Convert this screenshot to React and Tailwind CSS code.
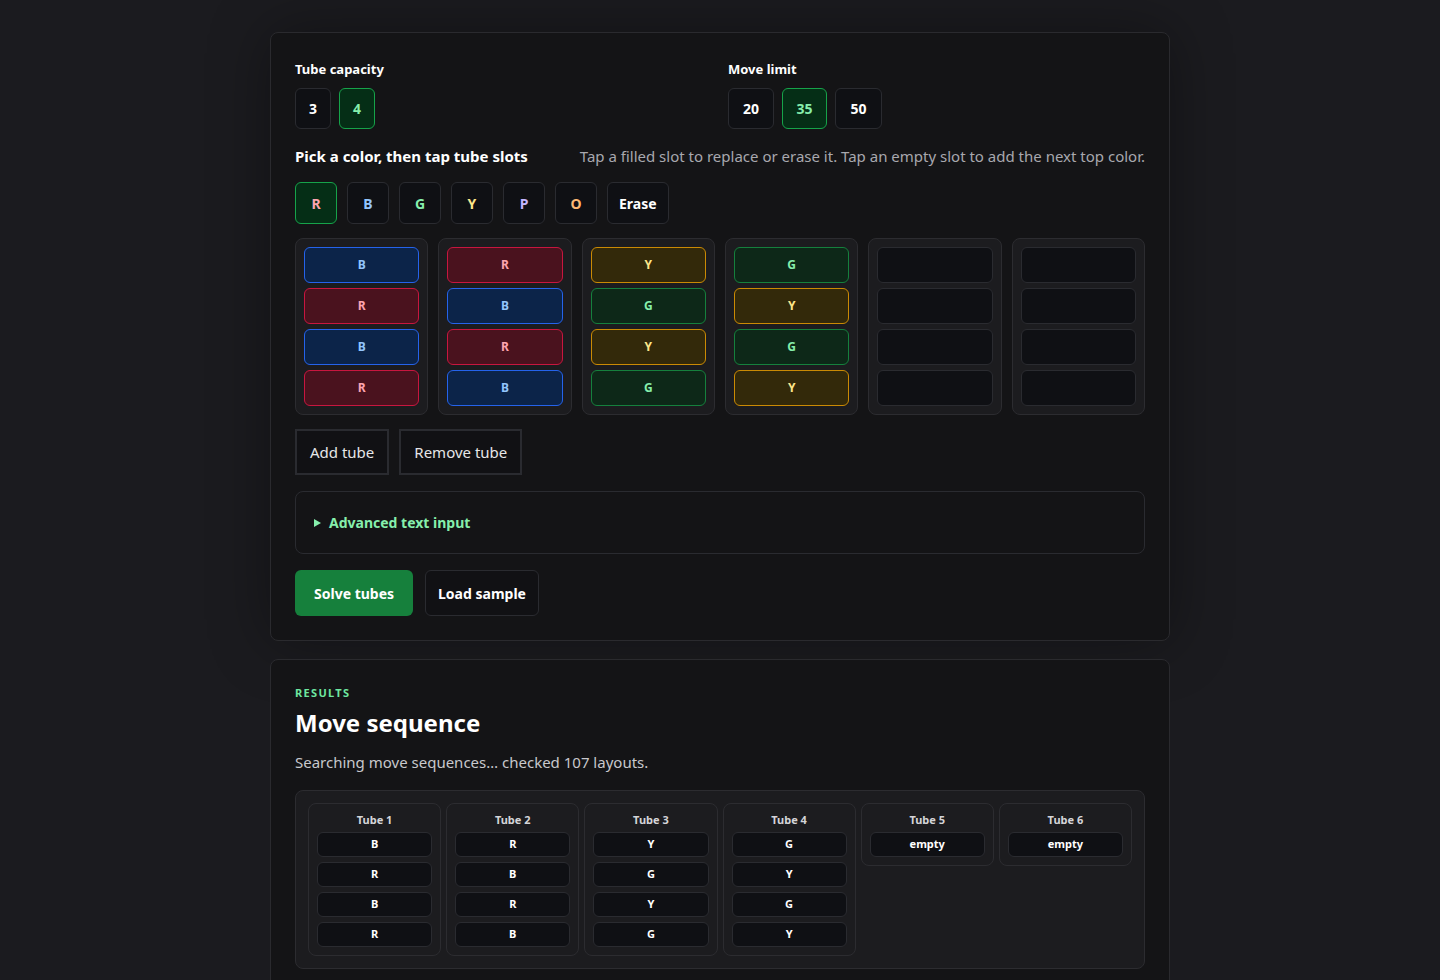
import React from "react";

const C = {
  R: "bg-[#4a121e] border-[#c8163f] text-[#fda4af]",
  B: "bg-[#0c2449] border-[#2563eb] text-[#93c5fd]",
  G: "bg-[#0d2818] border-[#15803d] text-[#86efac]",
  Y: "bg-[#33290a] border-[#ca8a04] text-[#fde68a]",
};
const tubes = [["B","R","B","R"],["R","B","R","B"],["Y","G","Y","G"],["G","Y","G","Y"],[],[]];
const pal = [["R","text-[#fda4af]"],["B","text-[#93c5fd]"],["G","text-[#86efac]"],["Y","text-[#fde68a]"],["P","text-[#c4b5fd]"],["O","text-[#fdba74]"]];

function Opt({ v, on, w = "w-9" }) {
  return (
    <div className={`${w} h-[41px] flex items-center justify-center rounded-md border text-[14px] font-bold ${on ? "bg-[#052e16] border-[#16a34a] text-[#86efac]" : "bg-[#0f1014] border-[#2a2b30] text-white"}`}>{v}</div>
  );
}

export default function App() {
  return (
    <div className="min-h-screen bg-[#1b1b1f] py-8 text-white font-[Inter,'Liberation_Sans',sans-serif] [font-feature-settings:'zero']">
      <div className="w-[900px] mx-auto bg-[#141416] border border-[#2a2a2e] rounded-lg px-6 pt-[26px] pb-6 shadow-[0_0_60px_rgba(0,0,0,0.35)]">
        <div className="grid grid-cols-2 gap-4">
          <div>
            <div className="text-[13px] font-bold mb-[9px] leading-5">Tube capacity</div>
            <div className="flex gap-2"><Opt v="3" /><Opt v="4" on /></div>
          </div>
          <div>
            <div className="text-[13px] font-bold mb-[9px] leading-5">Move limit</div>
            <div className="flex gap-2"><Opt v="20" w="w-[46px]" /><Opt v="35" on w="w-[45px]" /><Opt v="50" w="w-[47px]" /></div>
          </div>
        </div>
        <div className="flex justify-between items-center mt-[17px] leading-5">
          <div className="text-[15px] font-bold">Pick a color, then tap tube slots</div>
          <div className="text-[15px] text-[#a8a8ae]">Tap a filled slot to replace or erase it. Tap an empty slot to add the next top color.</div>
        </div>
        <div className="flex gap-[10px] mt-[16px]">
          {pal.map(([l, c], i) => (
            <div key={l} className={`w-[42px] h-[42px] rounded-md border flex items-center justify-center font-bold text-[14px] ${c} ${i === 0 ? "bg-[#052e16] border-[#16a34a]" : "bg-[#0f1014] border-[#2a2b30]"}`}>{l}</div>
          ))}
          <div className="h-[42px] px-[11px] rounded-md border bg-[#0f1014] border-[#2a2b30] flex items-center font-bold text-[14px]">Erase</div>
        </div>
        <div className="grid grid-cols-6 gap-[10px] mt-[14px]">
          {tubes.map((t, i) => (
            <div key={i} className="bg-[#1c1c1f] border border-[#2c2c30] rounded-lg p-2 flex flex-col gap-[5px]">
              {[0,1,2,3].map(j => t[j] ? (
                <div key={j} className={`h-9 rounded-md border flex items-center justify-center text-[12px] font-bold ${C[t[j]]}`}>{t[j]}</div>
              ) : (
                <div key={j} className="h-9 rounded-md border border-[#2a2b30] bg-[#0f1014]" />
              ))}
            </div>
          ))}
        </div>
        <div className="flex gap-[10px] mt-[14px]">
          <div className="h-[46px] px-[13px] border-2 border-[#2a2b30] bg-[#111114] flex items-center text-[15px] text-[#e6e6e8]">Add tube</div>
          <div className="h-[46px] px-[13px] border-2 border-[#2a2b30] bg-[#111114] flex items-center text-[15px] text-[#e6e6e8]">Remove tube</div>
        </div>
        <div className="mt-4 h-[63px] rounded-lg border border-[#2a2b30] flex items-center px-[18px] text-[#86efac] font-bold text-[14px]">
          <svg width="7" height="8" viewBox="0 0 7 8" className="mr-[8px]"><path d="M0 0L7 4L0 8Z" fill="#86efac" /></svg>Advanced text input
        </div>
        <div className="flex gap-3 mt-4">
          <div className="h-[46px] px-[19px] rounded-md bg-[#16803c] flex items-center font-bold text-[14px]">Solve tubes</div>
          <div className="h-[46px] px-3 rounded-md border border-[#2a2b30] bg-[#111114] flex items-center font-bold text-[14px]">Load sample</div>
        </div>
      </div>

      <div className="w-[900px] mx-auto mt-[18px] bg-[#141416] border border-[#2a2a2e] rounded-lg px-6 pt-[25px] pb-6">
        <div className="text-[11px] font-bold tracking-[0.12em] text-[#6ee7a0] leading-4">RESULTS</div>
        <div className="text-[24px] font-bold mt-[6px] leading-8">Move sequence</div>
        <div className="text-[15px] text-[#c8c8cc] mt-[13px] leading-5">Searching move sequences… checked 107 layouts.</div>
        <div className="mt-[18px] bg-[#1c1c1f] border border-[#2c2c30] rounded-lg p-3 grid grid-cols-6 gap-[5px] items-start">
          {tubes.map((t, i) => (
            <div key={i} className="border border-[#2c2c30] rounded-lg px-2 pt-[8px] pb-2">
              <div className="text-center text-[11px] font-bold text-[#d4d4d8] mb-[4px] leading-4">Tube {i + 1}</div>
              <div className="flex flex-col gap-[5px]">
                {(t.length ? t : ["empty"]).map((s, j) => (
                  <div key={j} className="h-[25px] rounded-md border border-[#2a2b30] bg-[#0f1014] flex items-center justify-center text-[11px] font-bold">{s}</div>
                ))}
              </div>
            </div>
          ))}
        </div>
      </div>
    </div>
  );
}
